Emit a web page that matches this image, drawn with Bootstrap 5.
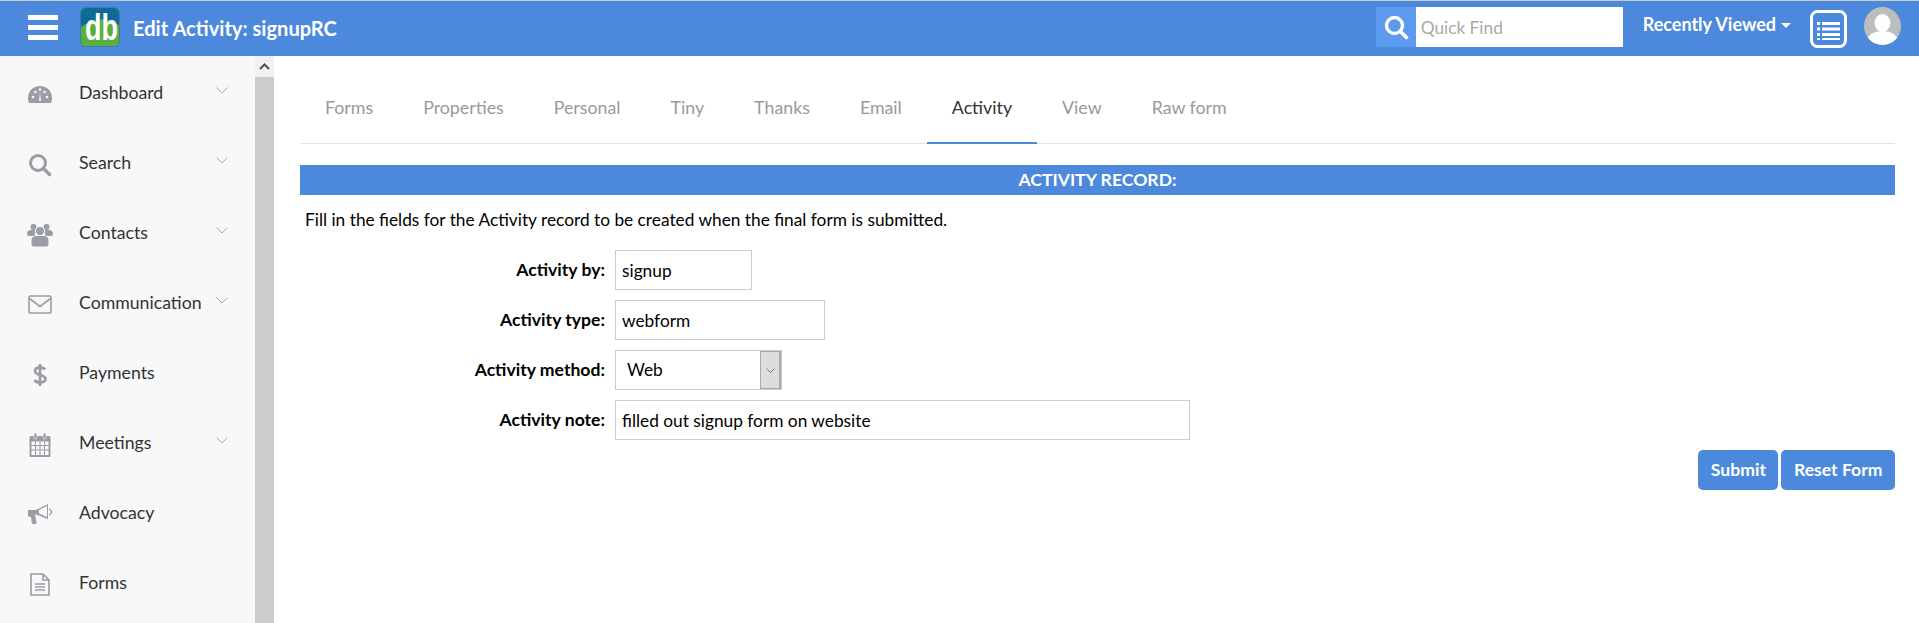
<!doctype html>
<html lang="en">

<head>
    <meta charset="utf-8">
    <meta name="viewport" content="width=device-width, initial-scale=1">
    <title>Edit Activity: signupRC</title>
    <link href="https://cdn.jsdelivr.net/npm/bootstrap@5.3.5/dist/css/bootstrap.min.css" rel="stylesheet">
    <style>
        html, body {
            height: 623px;
            overflow: hidden;
        }

        body {
            font-family: Lato, "Open Sans", sans-serif;
            font-size: 17.3px;
            color: #000;
            background-color: #fff;
            border-top: 1px solid #ccc;
        }

        .top-bar {
            height: 55px;
            background-color: #4c89dc;
            padding: 0 0 3px;
            flex-wrap: nowrap;
        }

        .burger {
            width: 30px;
            margin-left: 28px;
            margin-right: 22px;
        }

        .burger span {
            display: block;
            height: 5px;
            background-color: #fff;
            margin: 5px 0;
        }

        .page-heading {
            font-size: 20.1px;
            font-weight: 700;
            color: #fff;
            margin-left: 13px;
            margin-top: 3px;
        }

        .find-icon {
            width: 40px;
            height: 40px;
            background-color: #5c9aed;
        }

        .find-input {
            width: 207px;
            height: 40px;
            border: 0;
            padding: 0 5px;
            font-size: 17.3px;
            font-family: Lato, sans-serif;
            outline: 0;
        }

        .find-input::placeholder {
            color: #aaa;
        }

        .recent-link {
            font-size: 18px;
            font-weight: 700;
            color: #fff;
            text-decoration: none;
            margin-left: 20px;
            margin-top: -6px;
        }

        .recent-caret {
            display: inline-block;
            border-left: 5px solid transparent;
            border-right: 5px solid transparent;
            border-top: 5px solid #fff;
            margin-left: 5px;
            vertical-align: 3px;
        }

        .list-box {
            margin-left: 19px;
            margin-top: 4px;
        }

        .avatar-box {
            margin-left: 17px;
            margin-right: 18px;
            margin-top: -2px;
        }

        .page-body {
            height: 567px;
        }

        .side-menu {
            width: 255px;
            background-color: #f8f8f8;
            padding-top: 3px;
        }

        .menu-row {
            height: 70px;
            color: #333;
            font-size: 17.7px;
            text-decoration: none;
            padding-left: 26px;
            padding-bottom: 1px;
        }

        .menu-icon {
            width: 28px;
            margin-right: 25px;
            text-align: center;
        }

        .menu-chevron {
            margin-left: auto;
            margin-right: 27px;
            margin-top: -7px;
        }

        .side-scroll {
            width: 19px;
            background-color: #ccc;
        }

        .scroll-up {
            height: 21px;
            background-color: #f1f1f1;
        }

        .main-pane {
            padding: 0 24px 0 26px;
            min-width: 0;
        }

        .tab-strip {
            border-bottom: 1px solid #e4e4e4;
            height: 88px;
        }

        .tab-item {
            color: #999;
            font-size: 17.8px;
            text-decoration: none;
            padding: 41px 25px 0;
            height: 88px;
            line-height: 20px;
            margin-bottom: -1px;
        }

        .tab-item.is-current {
            color: #333;
            border-bottom: 2px solid #4c89dc;
        }

        .record-title {
            height: 30px;
            line-height: 30px;
            margin-top: 21px;
            background-color: #4c89dc;
            color: #fff;
            font-size: 17.6px;
            font-weight: 700;
            text-align: center;
        }

        .record-intro {
            margin: 12px 0 0 5px;
            line-height: 26px;
        }

        .record-form {
            margin-top: 17px;
        }

        .field-row {
            height: 40px;
            margin-bottom: 10px;
        }

        .field-label {
            width: 315px;
            padding-right: 10px;
            text-align: right;
            font-size: 17.6px;
            font-weight: 700;
        }

        .field-input {
            height: 40px;
            border: 1px solid #ccc;
            padding: 0 6px;
            font-family: Lato, sans-serif;
            font-size: 17.3px;
            color: #000;
            outline: 0;
        }

        .w-by { width: 137px; }
        .w-type { width: 210px; }
        .w-note { width: 575px; }

        .method-box {
            width: 167px;
            height: 40px;
            border: 1px solid #ccc;
        }

        .method-box select {
            appearance: none;
            border: 0;
            background: #fff;
            font-family: Lato, sans-serif;
            font-size: 17.3px;
            padding: 0 11px;
            min-width: 0;
            outline: 0;
        }

        .method-arrow {
            width: 21px;
            background-color: #ddd;
            border: 1px solid #aaa;
            border-width: 1px 2px 1px 1px;
        }

        .form-actions {
            gap: 3px;
        }

        .action-btn {
            height: 40px;
            background-color: #4c89dc;
            border: 0;
            color: #fff;
            font-weight: 700;
            border-radius: 5px;
            padding: 0 12.500px;
            font-size: 17.6px;
        }
    </style>
</head>

<body>
    <nav class="navbar top-bar d-flex align-items-center">
        <div class="d-flex align-items-center">
            <div class="burger"><span></span><span></span><span></span></div>
            <svg width="40" height="40" viewBox="0 0 40 40">
                <rect x="0.5" y="0.5" width="39" height="39" rx="5" fill="#5aad3f" stroke="#3f78b0" />
                <path d="M1 6a5 5 0 0 1 5-5h28a5 5 0 0 1 5 5v12C28 9 14 11 1 20z" fill="#0e6b98" />
                <text transform="translate(5 32.5) scale(.75 1)" fill="#fff" font-family="Liberation Sans" font-weight="700" font-size="36">db</text>
            </svg>
            <span class="page-heading">Edit Activity: signupRC</span>
        </div>
        <div class="d-flex align-items-center">
            <div class="find-icon d-flex align-items-center justify-content-center">
                <svg width="26" height="26" viewBox="0 0 26 26" fill="none" stroke="#fff">
                    <circle cx="11.5" cy="11.5" r="8" stroke-width="3.4" />
                    <path d="M17.5 17.5l6 6" stroke-width="3.6" stroke-linecap="round" />
                </svg>
            </div>
            <input class="find-input" type="text" placeholder="Quick Find">
            <a class="recent-link" href="#">Recently Viewed<span class="recent-caret"></span></a>
            <svg class="list-box" width="37" height="38" viewBox="0 0 37 38">
                <rect x="1.5" y="1.5" width="34" height="35" rx="6" fill="none" stroke="#fff" stroke-width="3" />
                <path d="M7 12h3v3H7zM12 12h18v3H12zM7 17.500h3v3H7zM12 17.500h18v3H12zM7 23h3v3H7zM12 23h18v3H12zM7 28h3v2H7zM12 28h18v2H12z" fill="#fff" />
            </svg>
            <svg class="avatar-box" width="37" height="38" viewBox="0 0 37 38">
                <defs>
                    <clipPath id="avatarClip"><ellipse cx="18.500" cy="19" rx="18.500" ry="19" /></clipPath>
                </defs>
                <g clip-path="url(#avatarClip)">
                    <rect width="37" height="38" fill="#bdbdbd" />
                    <ellipse cx="18.500" cy="16" rx="8" ry="9" fill="#fff" />
                    <ellipse cx="18.500" cy="35" rx="16" ry="11" fill="#fff" />
                </g>
            </svg>
        </div>
    </nav>

    <div class="page-body d-flex">
        <div class="side-menu flex-shrink-0">
            <a class="menu-row d-flex align-items-center" href="#">
                <span class="menu-icon"><svg width="26" height="20" viewBox="0 0 26 20"><path d="M13 1C6 1 1 6 1 13c0 2 .4 3.500 1 5h22c.6-1.500 1-3 1-5 0-7-5-12-12-12z" fill="#9a9ca6" /><path d="M13 7l-1 9h2z" fill="#f8f8f8" /><circle cx="6" cy="12" r="1.300" fill="#f8f8f8" /><circle cx="20" cy="12" r="1.300" fill="#f8f8f8" /><circle cx="8.500" cy="7" r="1.300" fill="#f8f8f8" /><circle cx="17.500" cy="7" r="1.300" fill="#f8f8f8" /><circle cx="13" cy="4.500" r="1.300" fill="#f8f8f8" /></svg></span>
                <span>Dashboard</span>
                <svg class="menu-chevron" width="12" height="7" viewBox="0 0 12 7" fill="none" stroke="#aaa"><path d="M.5.5L6 6l5.500-5.500" /></svg>
            </a>
            <a class="menu-row d-flex align-items-center" href="#">
                <span class="menu-icon"><svg width="24" height="24" viewBox="0 0 24 24" fill="none" stroke="#9a9ca6"><circle cx="10" cy="10" r="7.500" stroke-width="3" /><path d="M15.500 15.500l6 6" stroke-width="3.400" stroke-linecap="round" /></svg></span>
                <span>Search</span>
                <svg class="menu-chevron" width="12" height="7" viewBox="0 0 12 7" fill="none" stroke="#aaa"><path d="M.5.5L6 6l5.500-5.500" /></svg>
            </a>
            <a class="menu-row d-flex align-items-center" href="#">
                <span class="menu-icon"><svg width="26" height="24" viewBox="0 0 26 24" fill="#9a9ca6"><circle cx="6.500" cy="4" r="3" /><circle cx="19.500" cy="4" r="3" /><path d="M0 11c0-3 2-4 4-4h4v6H2c-1 0-2-.8-2-2zM26 11c0-3-2-4-4-4h-4v6h6c1 0 2-.8 2-2z" /><circle cx="13" cy="8" r="4.500" stroke="#f8f8f8" /><path d="M4 18c0-4 3-5.500 5-5.500h8c2 0 5 1.500 5 5.500v3c0 1.500-1 3-3 3H7c-2 0-3-1.500-3-3z" stroke="#f8f8f8" /></svg></span>
                <span>Contacts</span>
                <svg class="menu-chevron" width="12" height="7" viewBox="0 0 12 7" fill="none" stroke="#aaa"><path d="M.5.5L6 6l5.500-5.500" /></svg>
            </a>
            <a class="menu-row d-flex align-items-center" href="#">
                <span class="menu-icon"><svg width="24" height="19" viewBox="0 0 24 19" fill="none" stroke="#9a9ca6" stroke-width="1.600"><rect x="1" y="1" width="22" height="17" rx="1.500" /><path d="M1.500 3.500L12 11.500l10.500-8" /></svg></span>
                <span>Communication</span>
                <svg class="menu-chevron" width="12" height="7" viewBox="0 0 12 7" fill="none" stroke="#aaa"><path d="M.5.5L6 6l5.500-5.500" /></svg>
            </a>
            <a class="menu-row d-flex align-items-center" href="#">
                <span class="menu-icon"><svg width="14" height="24" viewBox="0 0 14 24" fill="none" stroke="#9a9ca6" stroke-width="2.800"><path d="M12 6.500C11 5 9.500 4.500 7 4.500c-3 0-5 1.300-5 3.500 0 5 10.500 3 10.500 8 0 2.200-2.500 3.500-5.500 3.500-2.500 0-4.500-.8-5.500-2.500" /><path d="M7 1v22" /></svg></span>
                <span>Payments</span>
            </a>
            <a class="menu-row d-flex align-items-center" href="#">
                <span class="menu-icon"><svg width="22" height="24" viewBox="0 0 22 24"><path d="M2 3h18a1.500 1.500 0 0 1 1.500 1.500v18A1.500 1.500 0 0 1 20 24H2a1.500 1.500 0 0 1-1.500-1.500v-18A1.500 1.500 0 0 1 2 3z" fill="#9a9ca6" /><rect x="5" y="0" width="3" height="6" rx="1.500" fill="#9a9ca6" stroke="#f8f8f8" stroke-width=".7" /><rect x="14" y="0" width="3" height="6" rx="1.500" fill="#9a9ca6" stroke="#f8f8f8" stroke-width=".7" /><path d="M2.500 8.500h17v13.500h-17z" fill="#f8f8f8" /><path d="M2.500 12.500h17M2.500 17h17M6.500 8.500V22M11 8.500V22M15.500 8.500V22" stroke="#9a9ca6" /></svg></span>
                <span>Meetings</span>
                <svg class="menu-chevron" width="12" height="7" viewBox="0 0 12 7" fill="none" stroke="#aaa"><path d="M.5.5L6 6l5.500-5.500" /></svg>
            </a>
            <a class="menu-row d-flex align-items-center" href="#">
                <span class="menu-icon"><svg width="24" height="21" viewBox="0 0 24 21"><path d="M0 6h8l12-6v15L8 10.500H7l1.500 8c.1 1-.5 1.500-1.500 1.500H5c-.8 0-1-.5-1.200-1.200L3 13H2c-1 0-2-1-2-2z" fill="#9a9ca6" /><path d="M11 6l8-4v11l-8-3.500z" fill="#f8f8f8" /><path d="M21 5c1.500.5 2.500 1.500 2.500 3S22.500 10.500 21 11" fill="none" stroke="#9a9ca6" stroke-width="1.300" /></svg></span>
                <span>Advocacy</span>
            </a>
            <a class="menu-row d-flex align-items-center" href="#">
                <span class="menu-icon"><svg width="20" height="23" viewBox="0 0 20 23" fill="none" stroke="#9a9ca6" stroke-width="1.600"><path d="M1 1h12l6 6v15H1z" /><path d="M13 1v6h6" /><path d="M5 11h10M5 14h10M5 17h10" /></svg></span>
                <span>Forms</span>
            </a>
        </div>
        <div class="side-scroll flex-shrink-0">
            <div class="scroll-up d-flex align-items-center justify-content-center">
                <svg width="11" height="7" viewBox="0 0 11 7" fill="none" stroke="#505050" stroke-width="2"><path d="M1 6l4.500-4.500L10 6" /></svg>
            </div>
        </div>
        <main class="main-pane flex-grow-1">
            <div class="tab-strip d-flex">
                <a class="tab-item" href="#">Forms</a>
                <a class="tab-item" href="#">Properties</a>
                <a class="tab-item" href="#">Personal</a>
                <a class="tab-item" href="#">Tiny</a>
                <a class="tab-item" href="#">Thanks</a>
                <a class="tab-item" href="#">Email</a>
                <a class="tab-item is-current" href="#">Activity</a>
                <a class="tab-item" href="#">View</a>
                <a class="tab-item" href="#">Raw form</a>
            </div>
            <div class="record-title">ACTIVITY RECORD:</div>
            <p class="record-intro">Fill in the fields for the Activity record to be created when the final form is submitted.</p>
            <form class="record-form">
                <div class="field-row d-flex align-items-center">
                    <label class="field-label">Activity by:</label>
                    <input class="field-input w-by" type="text" value="signup">
                </div>
                <div class="field-row d-flex align-items-center">
                    <label class="field-label">Activity type:</label>
                    <input class="field-input w-type" type="text" value="webform">
                </div>
                <div class="field-row d-flex align-items-center">
                    <label class="field-label">Activity method:</label>
                    <div class="method-box d-flex">
                        <select class="flex-grow-1"><option>Web</option></select>
                        <span class="method-arrow d-flex align-items-center justify-content-center">
                            <svg width="9" height="5" viewBox="0 0 9 5" fill="none" stroke="#777"><path d="M.5.5l4 4 4-4" /></svg>
                        </span>
                    </div>
                </div>
                <div class="field-row d-flex align-items-center">
                    <label class="field-label">Activity note:</label>
                    <input class="field-input w-note" type="text" value="filled out signup form on website">
                </div>
                <div class="form-actions d-flex justify-content-end">
                    <button class="action-btn" type="button">Submit</button>
                    <button class="action-btn" type="button">Reset Form</button>
                </div>
            </form>
        </main>
    </div>

    <script src="https://cdn.jsdelivr.net/npm/bootstrap@5.3.5/dist/js/bootstrap.bundle.min.js"></script>
</body>

</html>
